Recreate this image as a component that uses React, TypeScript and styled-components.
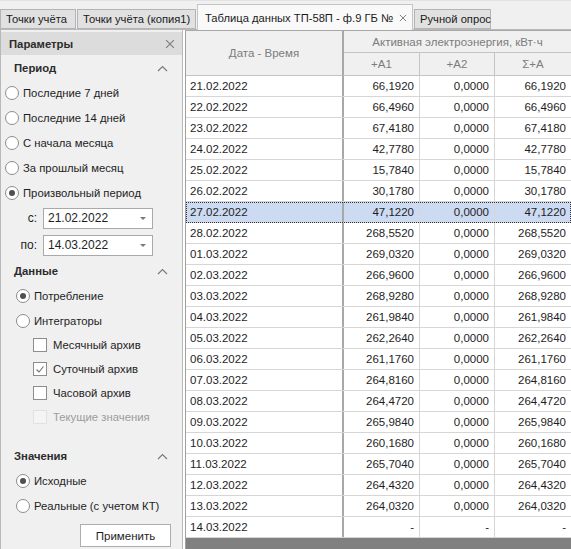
import React from "react";
import styled, { createGlobalStyle } from "styled-components";

const GlobalStyle = createGlobalStyle`
  html, body {
    margin: 0;
    padding: 0;
    background: #f0f0f0;
  }
  body {
    font-family: "Liberation Sans", Arial, sans-serif;
    font-size: 11px;
    color: #1e1e1e;
  }
`;

const Window = styled.div`
  width: 571px;
  height: 549px;
  display: flex;
  flex-direction: column;
  overflow: hidden;
  background: #f0f0f0;
`;

const TabStrip = styled.div`
  height: 30px;
  display: flex;
  align-items: flex-end;
  box-sizing: border-box;
  border-top: 1px solid #e2e2e2;
  border-bottom: 1px solid #b9b9b9;
  padding-top: 3px;
`;

const Tab = styled.div<{ $active?: boolean; $width: number }>`
  box-sizing: border-box;
  width: ${(p) => p.$width}px;
  height: ${(p) => (p.$active ? 26 : 20)}px;
  margin-bottom: ${(p) => (p.$active ? -1 : 0)}px;
  margin-right: 1px;
  display: flex;
  align-items: center;
  gap: 6px;
  padding: 0 ${(p) => (p.$active ? 8 : 4)}px 0 ${(p) => (p.$active ? 7 : 5)}px;
  background: ${(p) => (p.$active ? "#f9f9f9" : "#e1e1e1")};
  border: 1px solid ${(p) => (p.$active ? "#c4c4c4" : "#b4b4b4")};
  border-bottom: ${(p) => (p.$active ? "none" : "1px solid #b4b4b4")};
  white-space: nowrap;
  color: #1a1a1a;
  font-size: 11.2px;
`;

const TabLabel = styled.span`
  flex: 1;
`;

const TabClose = styled.span`
  color: #7a7a7a;
  display: flex;
`;

const Body = styled.div`
  flex: 1;
  display: flex;
  min-height: 0;
  background: #ffffff;
`;

const Panel = styled.div`
  width: 183px;
  box-sizing: border-box;
  border-left: 1px solid #b8b8b8;
  border-right: 1px solid #b8b8b8;
  background: #f0f0f0;
  display: flex;
  flex-direction: column;
  font-size: 11.3px;
`;

const PanelHeader = styled.div`
  height: 25px;
  box-sizing: border-box;
  background: #dcdcdc;
  border-top: 2px solid #f0f0f0;
  display: flex;
  align-items: center;
  justify-content: space-between;
  padding: 0 7px 0 8px;
  font-weight: bold;
  color: #2b2b2b;
`;

const SectionHead = styled.div<{ $top?: number }>`
  height: 24px;
  margin-top: ${(p) => p.$top ?? 0}px;
  display: flex;
  align-items: center;
  justify-content: space-between;
  padding: 0 14px 0 13px;
  font-weight: bold;
  color: #2b2b2b;
`;

const OptionRow = styled.div<{ $indent: number; $h?: number; $disabled?: boolean }>`
  height: ${(p) => p.$h ?? 25}px;
  display: flex;
  align-items: center;
  gap: 4px;
  padding-left: ${(p) => p.$indent}px;
  color: ${(p) => (p.$disabled ? "#9c9c9c" : "#1e1e1e")};
`;

const RadioMark = styled.span<{ $checked?: boolean }>`
  width: 14px;
  height: 14px;
  box-sizing: border-box;
  border-radius: 50%;
  border: 1px solid #8d8d8d;
  background: #ffffff;
  display: flex;
  align-items: center;
  justify-content: center;
  &::after {
    content: "";
    width: 6px;
    height: 6px;
    border-radius: 50%;
    background: ${(p) => (p.$checked ? "#505050" : "transparent")};
  }
`;

const CheckMark = styled.span<{ $disabled?: boolean }>`
  width: 14px;
  height: 14px;
  box-sizing: border-box;
  border: 1px solid ${(p) => (p.$disabled ? "#e2e2e2" : "#8d8d8d")};
  background: ${(p) => (p.$disabled ? "#f4f4f4" : "#ffffff")};
  display: flex;
  align-items: center;
  justify-content: center;
  margin-right: 2px;
`;

const DateRow = styled.div<{ $h: number }>`
  height: ${(p) => p.$h}px;
  display: flex;
  align-items: center;
`;

const DateLabel = styled.span`
  width: 42px;
  text-align: right;
  padding-right: 6px;
  box-sizing: border-box;
  font-size: 12px;
`;

const DateBox = styled.div`
  width: 110px;
  height: 21px;
  box-sizing: border-box;
  border: 1px solid #a9a9a9;
  background: #ffffff;
  display: flex;
  align-items: center;
  justify-content: space-between;
  padding: 0 6px 0 4px;
  font-size: 12px;
`;

const DropArrow = styled.span`
  width: 0;
  height: 0;
  border-left: 3px solid transparent;
  border-right: 3px solid transparent;
  border-top: 3px solid #7a7a7a;
`;

const ApplyButton = styled.button`
  margin: 6px 0 0 79px;
  width: 91px;
  height: 23px;
  background: #ffffff;
  border: 1px solid #adadad;
  font-family: inherit;
  font-size: 11.5px;
  color: #1e1e1e;
  padding: 0;
`;

const GridArea = styled.div`
  flex: 1;
  margin-left: 2px;
  display: flex;
  flex-direction: column;
  background: #808080;
  border-left: 1px solid #a0a0a0;
  border-top: 1px solid #a8a8a8;
  font-size: 11.5px;
`;

const COLS = "158px 76px 75px 1fr";

const HeadGrid = styled.div`
  display: grid;
  grid-template-columns: ${COLS};
  grid-template-rows: 22px 23px;
  background: #f0f0f0;
  color: #7c7c7c;
`;

const HeadCell = styled.div<{ $col: string; $row: string; $thick?: boolean; $last?: boolean }>`
  grid-column: ${(p) => p.$col};
  grid-row: ${(p) => p.$row};
  display: flex;
  align-items: center;
  justify-content: center;
  box-sizing: border-box;
  border-bottom: 1px solid #c4c4c4;
  border-right: ${(p) => (p.$last ? "none" : p.$thick ? "2px solid #a8a8a8" : "1px solid #c4c4c4")};
`;

const DataRow = styled.div<{ $selected?: boolean }>`
  display: grid;
  grid-template-columns: ${COLS};
  height: 21px;
  box-sizing: border-box;
  background: ${(p) => (p.$selected ? "#ccdaf2" : "#ffffff")};
  border-bottom: 1px solid #d6d6d6;
  outline: ${(p) => (p.$selected ? "1px dotted #333" : "none")};
  outline-offset: -1px;
`;

const Cell = styled.div<{ $date?: boolean; $last?: boolean }>`
  display: flex;
  align-items: center;
  justify-content: ${(p) => (p.$date ? "flex-start" : "flex-end")};
  padding: ${(p) => (p.$date ? "0 0 0 4px" : "0 5px 0 0")};
  box-sizing: border-box;
  border-right: ${(p) => (p.$last ? "none" : p.$date ? "2px solid #a8a8a8" : "1px solid #d6d6d6")};
  color: #1e1e1e;
`;

const Chevron = () => (
  <svg width="11" height="7" viewBox="0 0 11 7">
    <polyline points="1,6 5.5,1.5 10,6" fill="none" stroke="#7a7a7a" strokeWidth="1.2" />
  </svg>
);

const Cross = ({ size = 9 }: { size?: number }) => (
  <svg width={size} height={size} viewBox="0 0 9 9">
    <path d="M1 1 L8 8 M8 1 L1 8" stroke="#808080" strokeWidth="1.1" />
  </svg>
);

const Tick = () => (
  <svg width="10" height="10" viewBox="0 0 10 10">
    <polyline points="1.5,5.5 4,8 8.5,2.5" fill="none" stroke="#707070" strokeWidth="1.1" />
  </svg>
);

const rows: [string, string, string, string][] = [
  ["21.02.2022", "66,1920", "0,0000", "66,1920"],
  ["22.02.2022", "66,4960", "0,0000", "66,4960"],
  ["23.02.2022", "67,4180", "0,0000", "67,4180"],
  ["24.02.2022", "42,7780", "0,0000", "42,7780"],
  ["25.02.2022", "15,7840", "0,0000", "15,7840"],
  ["26.02.2022", "30,1780", "0,0000", "30,1780"],
  ["27.02.2022", "47,1220", "0,0000", "47,1220"],
  ["28.02.2022", "268,5520", "0,0000", "268,5520"],
  ["01.03.2022", "269,0320", "0,0000", "269,0320"],
  ["02.03.2022", "266,9600", "0,0000", "266,9600"],
  ["03.03.2022", "268,9280", "0,0000", "268,9280"],
  ["04.03.2022", "261,9840", "0,0000", "261,9840"],
  ["05.03.2022", "262,2640", "0,0000", "262,2640"],
  ["06.03.2022", "261,1760", "0,0000", "261,1760"],
  ["07.03.2022", "264,8160", "0,0000", "264,8160"],
  ["08.03.2022", "264,4720", "0,0000", "264,4720"],
  ["09.03.2022", "265,9840", "0,0000", "265,9840"],
  ["10.03.2022", "260,1680", "0,0000", "260,1680"],
  ["11.03.2022", "265,7040", "0,0000", "265,7040"],
  ["12.03.2022", "264,4320", "0,0000", "264,4320"],
  ["13.03.2022", "264,0320", "0,0000", "264,0320"],
  ["14.03.2022", "-", "-", "-"],
];

const periods = [
  "Последние 7 дней",
  "Последние 14 дней",
  "С начала месяца",
  "За прошлый месяц",
  "Произвольный период",
];

const archives = [
  { label: "Месячный архив", checked: false },
  { label: "Суточный архив", checked: true },
  { label: "Часовой архив", checked: false },
  { label: "Текущие значения", checked: false, disabled: true },
];

export default function App() {
  return (
    <>
      <GlobalStyle />
      <Window>
        <TabStrip>
          <Tab $width={76}>
            <TabLabel>Точки учёта</TabLabel>
          </Tab>
          <Tab $width={119}>
            <TabLabel>Точки учёта (копия1)</TabLabel>
          </Tab>
          <Tab $active $width={216}>
            <TabLabel>Таблица данных ТП-58П - ф.9 ГБ №</TabLabel>
            <TabClose>
              <Cross size={8} />
            </TabClose>
          </Tab>
          <Tab $width={77}>
            <TabLabel>Ручной опрос</TabLabel>
          </Tab>
        </TabStrip>

        <Body>
          <Panel>
            <PanelHeader>
              <span>Параметры</span>
              <Cross size={10} />
            </PanelHeader>

            <SectionHead $top={1}>
              <span>Период</span>
              <Chevron />
            </SectionHead>
            {periods.map((p, i) => (
              <OptionRow key={p} $indent={4}>
                <RadioMark $checked={i === periods.length - 1} />
                {p}
              </OptionRow>
            ))}
            <DateRow $h={26}>
              <DateLabel>с:</DateLabel>
              <DateBox>
                21.02.2022
                <DropArrow />
              </DateBox>
            </DateRow>
            <DateRow $h={28}>
              <DateLabel>по:</DateLabel>
              <DateBox>
                14.03.2022
                <DropArrow />
              </DateBox>
            </DateRow>

            <SectionHead>
              <span>Данные</span>
              <Chevron />
            </SectionHead>
            <OptionRow $indent={15}>
              <RadioMark $checked />
              Потребление
            </OptionRow>
            <OptionRow $indent={15}>
              <RadioMark />
              Интеграторы
            </OptionRow>
            {archives.map((a) => (
              <OptionRow key={a.label} $indent={32} $h={24} $disabled={a.disabled}>
                <CheckMark $disabled={a.disabled}>{a.checked && <Tick />}</CheckMark>
                {a.label}
              </OptionRow>
            ))}

            <SectionHead $top={15}>
              <span>Значения</span>
              <Chevron />
            </SectionHead>
            <OptionRow $indent={15}>
              <RadioMark $checked />
              Исходные
            </OptionRow>
            <OptionRow $indent={15}>
              <RadioMark />
              Реальные (с учетом КТ)
            </OptionRow>
            <ApplyButton>Применить</ApplyButton>
          </Panel>

          <GridArea>
            <HeadGrid>
              <HeadCell $col="1" $row="1 / span 2" $thick>
                Дата - Время
              </HeadCell>
              <HeadCell $col="2 / span 3" $row="1" $last>
                Активная электроэнергия, кВт·ч
              </HeadCell>
              <HeadCell $col="2" $row="2">
                +А1
              </HeadCell>
              <HeadCell $col="3" $row="2">
                +А2
              </HeadCell>
              <HeadCell $col="4" $row="2" $last>
                Σ+А
              </HeadCell>
            </HeadGrid>
            {rows.map((r) => (
              <DataRow key={r[0]} $selected={r[0] === "27.02.2022"}>
                <Cell $date>{r[0]}</Cell>
                <Cell>{r[1]}</Cell>
                <Cell>{r[2]}</Cell>
                <Cell $last>{r[3]}</Cell>
              </DataRow>
            ))}
          </GridArea>
        </Body>
      </Window>
    </>
  );
}
